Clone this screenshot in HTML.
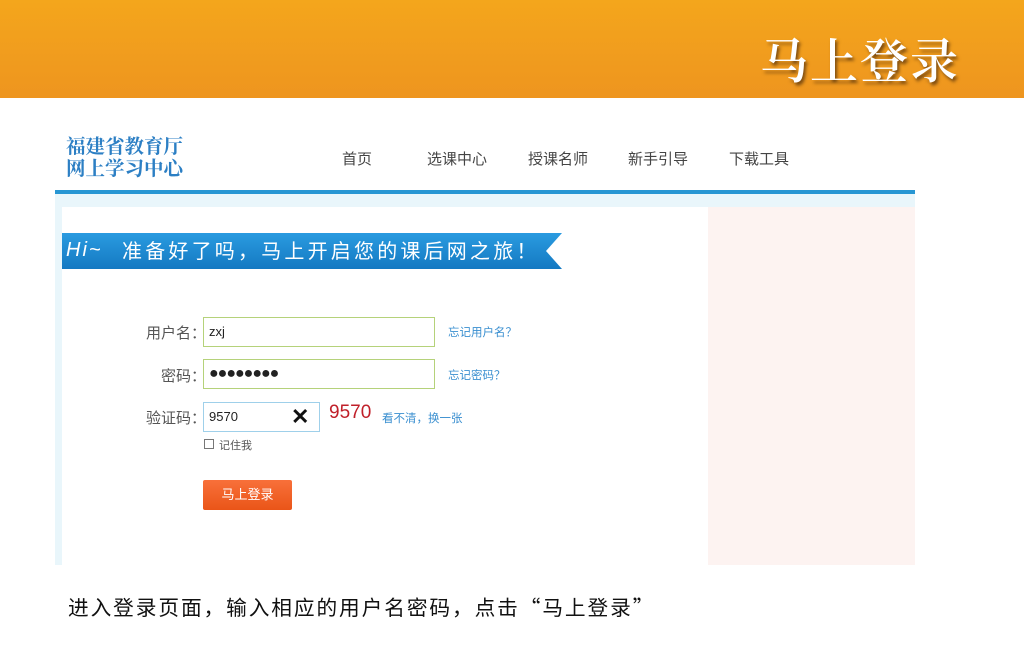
<!DOCTYPE html>
<html><head><meta charset="utf-8"><style>
*{margin:0;padding:0;box-sizing:border-box}
body{width:1024px;height:665px;position:relative;background:#fff;overflow:hidden;font-family:"Liberation Sans","Noto Sans CJK SC",sans-serif}
.a{position:absolute}
.hdr{left:0;top:0;width:1024px;height:98px;background:linear-gradient(#f4a61c,#ee951f)}
.title{left:760px;top:30px;font-family:"Noto Serif CJK SC",serif;font-size:48px;color:#fff;text-shadow:2px 3px 3px #7a4a10;font-weight:600;line-height:56px;letter-spacing:2px}
.logo{left:66px;top:134px;font-family:"Noto Serif CJK SC",serif;font-weight:bold;color:#2c7fc4;font-size:19.5px;line-height:22px}
.nav{top:148px;font-size:15px;color:#444}
.lbl{font-family:"Noto Sans CJK SC",sans-serif;font-size:15px;color:#555;text-align:right;width:75px}
.inp{border:1px solid #b5d27a;background:#fff;font-size:13px;color:#222;padding-left:5px}
.lnk{font-family:"Noto Sans CJK SC",sans-serif;font-size:11.5px;color:#3a8fd0}
</style></head><body>
<div class="a hdr"></div>
<div class="a title">马上登录</div>
<div class="a logo">福建省教育厅<br>网上学习中心</div>
<div class="a nav" style="left:342px">首页</div>
<div class="a nav" style="left:427px">选课中心</div>
<div class="a nav" style="left:528px">授课名师</div>
<div class="a nav" style="left:628px">新手引导</div>
<div class="a nav" style="left:729px">下载工具</div>
<div class="a" style="left:55px;top:190px;width:860px;height:4px;background:#2796d3"></div>
<div class="a" style="left:55px;top:194px;width:860px;height:371px;background:#e9f6fb"></div>
<div class="a" style="left:62px;top:207px;width:646px;height:358px;background:#fff"></div>
<div class="a" style="left:708px;top:207px;width:207px;height:358px;background:#fdf3f1"></div>
<svg class="a" style="left:62px;top:232px" width="505" height="40"><defs><linearGradient id="g" x1="0" y1="0" x2="0" y2="1"><stop offset="0" stop-color="#2a9be0"/><stop offset="1" stop-color="#1479c2"/></linearGradient></defs><polygon points="0,1 500,1 484,19 500,37 0,37" fill="url(#g)"/></svg>
<div class="a" style="left:66px;top:237px;font-size:20px;color:#fff;line-height:26px;font-style:italic;letter-spacing:2px">Hi~</div>
<div class="a" style="left:122px;top:237px;font-family:'Noto Sans CJK SC',sans-serif;font-size:20px;color:#fff;line-height:26px;letter-spacing:3.2px">准备好了吗，马上开启您的课后网之旅！</div>
<div class="a lbl" style="left:131px;top:322px">用户名：</div>
<div class="a inp" style="left:203px;top:317px;width:232px;height:30px;line-height:28px">zxj</div>
<div class="a lnk" style="left:448px;top:324px">忘记用户名？</div>
<div class="a lbl" style="left:131px;top:365px">密码：</div>
<div class="a inp" style="left:203px;top:359px;width:232px;height:30px;line-height:28px;font-size:16px;letter-spacing:-1px">●●●●●●●●</div>
<div class="a lnk" style="left:448px;top:367px">忘记密码？</div>
<div class="a lbl" style="left:131px;top:407px">验证码：</div>
<div class="a inp" style="left:203px;top:402px;width:117px;height:30px;line-height:28px;border-color:#9fd0ea">9570</div>
<div class="a" style="left:291px;top:404px;font-size:22px;color:#111;font-weight:bold">✕</div>
<div class="a" style="left:329px;top:402px;font-size:19px;color:#c0202a">9570</div>
<div class="a lnk" style="left:382px;top:410px">看不清，换一张</div>
<div class="a" style="left:204px;top:439px;width:10px;height:10px;border:1px solid #777"></div>
<div class="a" style="left:219px;top:437px;font-size:11px;color:#555">记住我</div>
<div class="a" style="left:203px;top:480px;width:89px;height:30px;background:linear-gradient(#f8703a,#ea5518);border-radius:2px;color:#fff;font-size:13px;text-align:center;line-height:30px">马上登录</div>
<div class="a" style="left:68px;top:591px;font-family:'Noto Sans CJK SC',sans-serif;font-size:20.7px;color:#111;letter-spacing:1.9px">进入登录页面，输入相应的用户名密码，点击“马上登录”</div>
</body></html>
